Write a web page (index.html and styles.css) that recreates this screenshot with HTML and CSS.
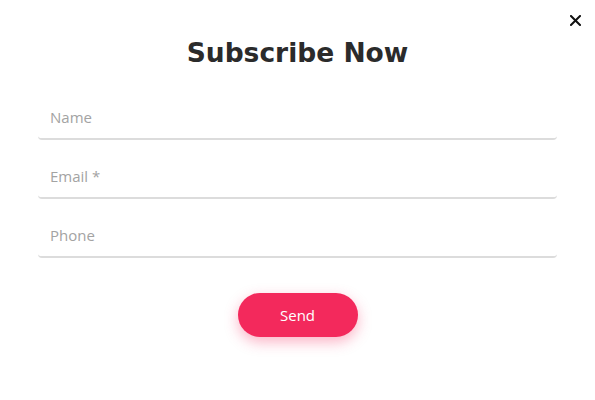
FILE: index.html
```html
<!DOCTYPE html>
<html lang="en">
<head>
<meta charset="utf-8">
<title>Subscribe Now</title>
<link rel="stylesheet" href="styles.css">
</head>
<body>
<div class="modal">
  <button class="close" aria-label="Close">
    <svg width="11" height="11" viewBox="0 0 11 11"><path d="M1 1 L10 10 M10 1 L1 10" stroke="#111" stroke-width="2" stroke-linecap="square"/></svg>
  </button>
  <h1 class="title">Subscribe Now</h1>
  <form class="form">
    <input class="field" type="text" placeholder="Name">
    <input class="field" type="email" placeholder="Email *">
    <input class="field" type="tel" placeholder="Phone">
    <button class="send" type="button">Send</button>
  </form>
</div>
</body>
</html>
```
FILE: styles.css
```css
html, body {
  margin: 0;
  padding: 0;
  background: #fff;
}
.modal {
  position: relative;
  width: 595px;
  height: 400px;
  box-sizing: border-box;
  padding: 36px 38px 0;
  display: flex;
  flex-direction: column;
  align-items: stretch;
}
.close {
  position: absolute;
  top: 15px;
  right: 14px;
  width: 11px;
  height: 11px;
  padding: 0;
  border: 0;
  background: none;
  display: flex;
}
.title {
  margin: 0;
  font-family: "DejaVu Sans", sans-serif;
  font-weight: 700;
  font-size: 26.5px;
  line-height: 34px;
  color: #2b2b2b;
  text-align: center;
}
.form {
  margin-top: 26px;
  display: flex;
  flex-direction: column;
  gap: 15px;
}
.field {
  height: 44px;
  box-sizing: border-box;
  border: 0;
  border-bottom: 2px solid #dcdcdc;
  border-radius: 4px;
  padding: 0 12px;
  font-family: "Open Sans", sans-serif;
  font-size: 15px;
  color: #333;
  background: #fff;
  outline: none;
}
.field::placeholder {
  color: #a3a3a3;
}
.send {
  align-self: center;
  margin-top: 20px;
  width: 120px;
  height: 44px;
  border: 0;
  border-radius: 22px;
  background: #f3295c;
  color: #fff;
  font-family: "Open Sans", sans-serif;
  font-size: 15px;
  box-shadow: 0 5px 14px rgba(243, 41, 92, 0.35);
}
```
